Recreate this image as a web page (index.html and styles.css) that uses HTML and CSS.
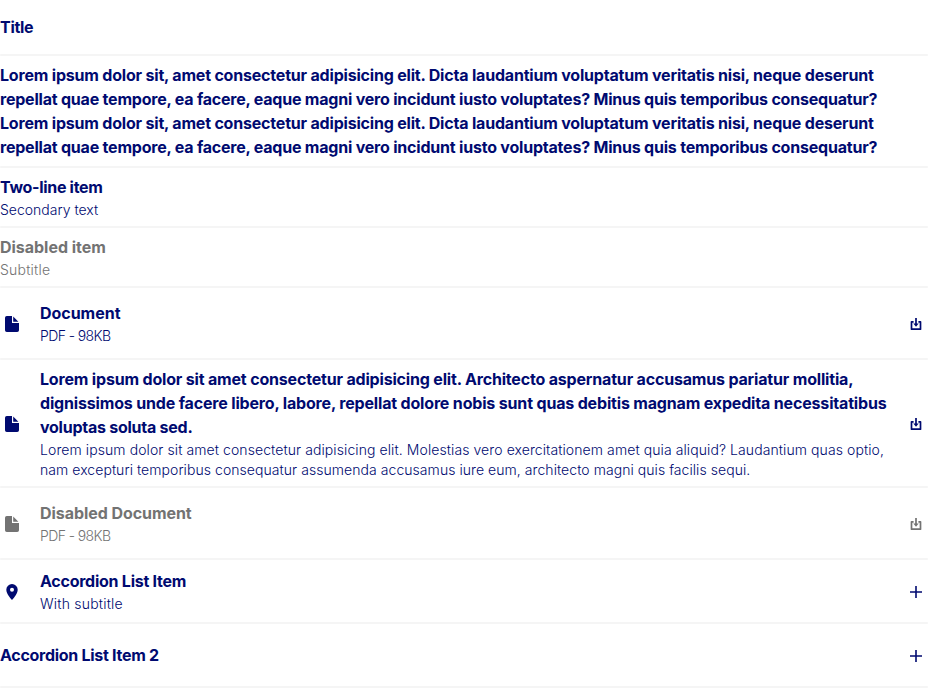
FILE: index.html
```
<!DOCTYPE html>
<html lang="en">
<head>
<meta charset="utf-8">
<title>List</title>
<link rel="stylesheet" href="styles.css">
</head>
<body>
<svg width="0" height="0" class="defs">
  <symbol id="file" viewBox="0 0 24 24"><path d="M6.800 4H12v7h7v7.200Q19 20 17.200 20H6.800Q5 20 5 18.200V5.800Q5 4 6.800 4zM13.200 4.500 18.400 9.700H13.200z"/></symbol>
  <symbol id="download" viewBox="0 0 16 16"><path d="M5.600 5.800H3.500v7.400h9V5.800h-2.100M8 2v6" fill="none" stroke="currentColor" stroke-width="1.700" stroke-linejoin="round"/><path d="M5.300 7.400h5.400L8 10.800z"/></symbol>
  <symbol id="pin" viewBox="0 0 24 24"><path fill-rule="evenodd" d="M12 4a5.700 5.700 0 0 0-5.700 5.700C6.300 14 12 20 12 20s5.700-6 5.700-10.300A5.700 5.700 0 0 0 12 4zm0 3.700a2 2 0 1 1 0 4 2 2 0 0 1 0-4z"/></symbol>
  <symbol id="plus" viewBox="0 0 16 16"><path d="M2 8h12M8 2v12" fill="none" stroke="currentColor" stroke-width="1.600"/></symbol>
</svg>
<ul class="list">
  <li class="item item-title"><div class="text"><p class="name n1">Title</p></div></li>
  <li class="item"><div class="text"><p class="name"><span class="l1">Lorem ipsum dolor sit, amet consectetur adipisicing elit. Dicta laudantium voluptatum veritatis nisi, neque deserunt</span> <span class="l2">repellat quae tempore, ea facere, eaque magni vero incidunt iusto voluptates? Minus quis temporibus consequatur?</span> <span class="l1">Lorem ipsum dolor sit, amet consectetur adipisicing elit. Dicta laudantium voluptatum veritatis nisi, neque deserunt</span> <span class="l2">repellat quae tempore, ea facere, eaque magni vero incidunt iusto voluptates? Minus quis temporibus consequatur?</span></p></div></li>
  <li class="item"><div class="text"><p class="name n2">Two-line item</p><p class="sub s1">Secondary text</p></div></li>
  <li class="item disabled"><div class="text"><p class="name n3">Disabled item</p><p class="sub s2">Subtitle</p></div></li>
  <li class="item document"><svg class="icon"><use href="#file"/></svg><div class="text"><p class="name n4">Document</p><p class="sub s3">PDF - 98KB</p></div><svg class="action"><use href="#download"/></svg></li>
  <li class="item"><svg class="icon"><use href="#file"/></svg><div class="text"><p class="name"><span class="l3">Lorem ipsum dolor sit amet consectetur adipisicing elit. Architecto aspernatur accusamus pariatur mollitia,</span> <span class="l4">dignissimos unde facere libero, labore, repellat dolore nobis sunt quas debitis magnam expedita necessitatibus</span> <span class="l5">voluptas soluta sed.</span></p><p class="sub"><span class="l6">Lorem ipsum dolor sit amet consectetur adipisicing elit. Molestias vero exercitationem amet quia aliquid? Laudantium quas optio,</span> <span class="l7">nam excepturi temporibus consequatur assumenda accusamus iure eum, architecto magni quis facilis sequi.</span></p></div><svg class="action"><use href="#download"/></svg></li>
  <li class="item document disabled"><svg class="icon"><use href="#file"/></svg><div class="text"><p class="name n5">Disabled Document</p><p class="sub s3">PDF - 98KB</p></div><svg class="action"><use href="#download"/></svg></li>
  <li class="item accordion"><svg class="icon"><use href="#pin"/></svg><div class="text"><p class="name n6">Accordion List Item</p><p class="sub s4">With subtitle</p></div><svg class="action"><use href="#plus"/></svg></li>
  <li class="item accordion"><div class="text"><p class="name n7">Accordion List Item 2</p></div><svg class="action"><use href="#plus"/></svg></li>
</ul>
</body>
</html>
```
FILE: styles.css
```
* { box-sizing: border-box; }
body { margin: 0; background: #fff; color: #000a70; font-family: Inter, "Liberation Sans", sans-serif; }
.defs { display: none; }
.list { list-style: none; margin: 0; padding: 0; }
.item { position: relative; display: flex; align-items: center; padding: 8px 0; min-height: 56px; }
.item::after { content: ""; position: absolute; left: 0; right: 0; bottom: 0; height: 2px; border-radius: 1px; background: #f5f5f5; }
.document { min-height: 72px; }
.accordion { min-height: 64px; }
.disabled { color: #737373; }
.text { flex: 1; min-width: 0; }
.name, .sub { margin: 0; white-space: nowrap; position: relative; top: -1px; }
.name { font-size: 16px; line-height: 24px; font-weight: 700; letter-spacing: -0.25px; }
.sub { font-size: 14px; line-height: 20px; font-weight: 300; top: 0; }
.name span, .sub span { display: block; }
.icon { width: 24px; height: 24px; margin-right: 16px; fill: currentColor; }
.action { width: 16px; height: 16px; margin: 0 4px 0 8px; fill: currentColor; }

/* Tracking per line */
.n1, .n2 { letter-spacing: -0.3px; }
.n3, .n4 { letter-spacing: -0.03px; }
.n5 { letter-spacing: -0.06px; }
.n7 { letter-spacing: -0.28px; }
.l1 { letter-spacing: -0.195px; }
.l2 { letter-spacing: -0.21px; }
.l3 { letter-spacing: -0.18px; }
.l4 { letter-spacing: -0.17px; }
.l6 { letter-spacing: 0.09px; }
.l7 { letter-spacing: 0.058px; }
.s2, .s4 { letter-spacing: 0.22px; }
.s1 { letter-spacing: 0; }
.s3 { letter-spacing: -0.6px; }
```
